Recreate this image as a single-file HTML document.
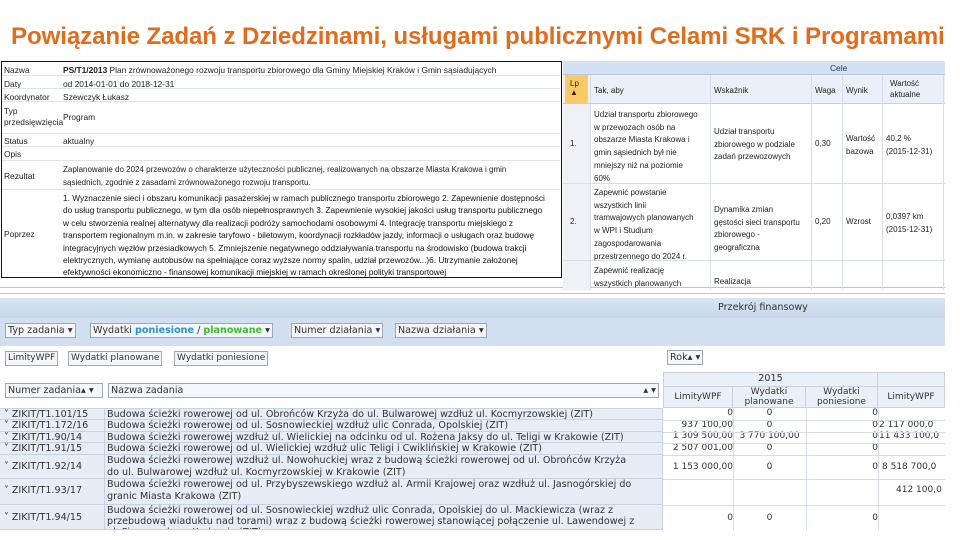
<!DOCTYPE html>
<html><head><meta charset="utf-8"><style>
*{margin:0;padding:0;box-sizing:border-box}
body{width:960px;height:540px;background:#fff;position:relative;overflow:hidden;font-family:"Liberation Sans","DejaVu Sans",sans-serif;color:#222}
.a{position:absolute;white-space:nowrap}
.t{font-size:8.4px}
.r{font-size:8px}
.v{font-family:"DejaVu Sans","Liberation Sans",sans-serif;font-size:9.6px;color:#333}
.btn{position:absolute;border:1px solid #9aa8ba;background:#f3f6fa;font-family:"DejaVu Sans",sans-serif;font-size:9.6px;color:#333;padding:1px 2px;white-space:nowrap;line-height:11px}
.cell{position:absolute;border-right:1px solid #c9d3df;border-bottom:1px solid #c9d3df;font-family:"DejaVu Sans",sans-serif;font-size:9.6px;color:#333;white-space:nowrap;overflow:hidden;line-height:11.5px}
</style></head><body>
<div class="a" style="left:11px;top:23px;font-size:24.1px;color:#e26b1c;font-weight:bold;letter-spacing:-0.1px">Powiązanie Zadań z Dziedzinami, usługami publicznymi Celami SRK i Programami</div>

<div class="a" style="left:1px;top:61px;width:561px;height:217px;border:1.5px solid #111"></div>
<div class="a t" style="left:4px;top:65px">Nazwa</div>
<div class="a t" style="left:4px;top:79px">Daty</div>
<div class="a t" style="left:4px;top:92px">Koordynator</div>
<div class="a t" style="left:4px;top:106px;line-height:11px">Typ<br>przedsięwzięcia</div>
<div class="a t" style="left:4px;top:136px">Status</div>
<div class="a t" style="left:4px;top:149px">Opis</div>
<div class="a t" style="left:4px;top:171px">Rezultat</div>
<div class="a t" style="left:4px;top:229px">Poprzez</div>
<div class="a" style="left:2px;top:75px;width:558px;border-top:1px solid #dde3ea"></div>
<div class="a" style="left:2px;top:88px;width:558px;border-top:1px solid #dde3ea"></div>
<div class="a" style="left:2px;top:101px;width:558px;border-top:1px solid #dde3ea"></div>
<div class="a" style="left:2px;top:133px;width:558px;border-top:1px solid #dde3ea"></div>
<div class="a" style="left:2px;top:146px;width:558px;border-top:1px solid #dde3ea"></div>
<div class="a" style="left:2px;top:160px;width:558px;border-top:1px solid #dde3ea"></div>
<div class="a" style="left:2px;top:189px;width:558px;border-top:1px solid #dde3ea"></div>
<div class="a t" style="left:63px;top:65px"><b>PS/T1/2013</b> Plan zrównoważonego rozwoju transportu zbiorowego dla Gminy Miejskiej Kraków i Gmin sąsiadujących</div>
<div class="a t" style="left:63px;top:79px">od 2014-01-01 do 2018-12-31</div>
<div class="a t" style="left:63px;top:92px">Szewczyk Łukasz</div>
<div class="a t" style="left:63px;top:112px">Program</div>
<div class="a t" style="left:63px;top:136px">aktualny</div>
<div class="a t" style="left:63px;top:164px;line-height:12.5px;font-size:8px">Zaplanowanie do 2024 przewozów o charakterze użyteczności publicznej, realizowanych na obszarze Miasta Krakowa i gmin<br>sąsiednich, zgodnie z zasadami zrównoważonego rozwoju transportu.</div>
<div class="a" style="left:63px;top:192px;line-height:12.4px;color:#111;font-size:8.3px">1. Wyznaczenie sieci i obszaru komunikacji pasażerskiej w ramach publicznego transportu zbiorowego 2. Zapewnienie dostępności<br>do usług transportu publicznego, w tym dla osób niepełnosprawnych 3. Zapewnienie wysokiej jakości usług transportu publicznego<br>w celu stworzenia realnej alternatywy dla realizacji podróży samochodami osobowymi 4. Integrację transportu miejskiego z<br>transportem regionalnym m.in. w zakresie taryfowo - biletowym, koordynacji rozkładów jazdy, informacji o usługach oraz budowę<br>integracyjnych węzłów przesiadkowych 5. Zmniejszenie negatywnego oddziaływania transportu na środowisko (budowa trakcji<br>elektrycznych, wymianę autobusów na spełniające coraz wyższe normy spalin, udział przewozów...)6. Utrzymanie założonej<br>efektywności ekonomiczno - finansowej komunikacji miejskiej w ramach określonej polityki transportowej</div>
<div class="a" style="left:0;top:287px;width:945px;border-top:1px solid #b9c6d6"></div>
<div class="a" style="left:0;top:293px;width:945px;border-top:1px solid #b9c6d6"></div>

<div class="a" style="left:563px;top:61px;width:382px;height:14px;background:#d3e1f2;border-bottom:1px solid #b8c8dc"></div>
<div class="a t" style="left:830px;top:63px;color:#335">Cele</div>
<div class="a" style="left:563px;top:75px;width:382px;height:29px;background:#eaf0f8;border-bottom:1px solid #c4d0de"></div>
<div class="a" style="left:565px;top:75px;width:23px;height:29px;background:#fbc966"></div>
<div class="a r" style="left:570px;top:79px">Lp<br>▲</div>
<div class="a r" style="left:594px;top:86px">Tak, aby</div>
<div class="a r" style="left:714px;top:86px">Wskaźnik</div>
<div class="a r" style="left:815px;top:86px">Waga</div>
<div class="a r" style="left:846px;top:86px">Wynik</div>
<div class="a r" style="left:890px;top:78px;line-height:11px">Wartość<br>aktualne</div>
<div class="a" style="left:563px;top:104px;width:27px;height:186px;background:#eef1f5"></div>
<div class="a" style="left:590px;top:75px;height:215px;border-left:1px solid #d8dee6"></div>
<div class="a" style="left:710px;top:75px;height:215px;border-left:1px solid #d8dee6"></div>
<div class="a" style="left:811px;top:75px;height:215px;border-left:1px solid #d8dee6"></div>
<div class="a" style="left:842px;top:75px;height:215px;border-left:1px solid #d8dee6"></div>
<div class="a" style="left:882px;top:75px;height:215px;border-left:1px solid #d8dee6"></div>
<div class="a" style="left:943px;top:75px;height:215px;border-left:1px solid #d8dee6"></div>
<div class="a" style="left:563px;top:183px;width:382px;border-top:1px solid #d8dee6"></div>
<div class="a" style="left:563px;top:260px;width:382px;border-top:1px solid #d8dee6"></div>
<div class="a r" style="left:570px;top:139px">1.</div>
<div class="a r" style="left:594px;top:109px;line-height:12.7px">Udział transportu zbiorowego<br>w przewozach osób na<br>obszarze Miasta Krakowa i<br>gmin sąsiednich był nie<br>mniejszy niż na poziomie<br>60%</div>
<div class="a r" style="left:714px;top:126px;line-height:12.7px">Udział transportu<br>zbiorowego w podziale<br>zadań przewozowych</div>
<div class="a r" style="left:815px;top:139px">0,30</div>
<div class="a r" style="left:846px;top:133px;line-height:12.7px">Wartość<br>bazowa</div>
<div class="a r" style="left:886px;top:133px;line-height:12.7px">40,2 %<br>(2015-12-31)</div>
<div class="a r" style="left:570px;top:217px">2.</div>
<div class="a r" style="left:594px;top:187px;line-height:12.7px">Zapewnić powstanie<br>wszystkich linii<br>tramwajowych planowanych<br>w WPI i Studium<br>zagospodarowania<br>przestrzennego do 2024 r.</div>
<div class="a r" style="left:714px;top:204px;line-height:12.7px">Dynamika zmian<br>gęstości sieci transportu<br>zbiorowego -<br>geograficzna</div>
<div class="a r" style="left:815px;top:217px">0,20</div>
<div class="a r" style="left:846px;top:217px">Wzrost</div>
<div class="a r" style="left:886px;top:211px;line-height:12.7px">0,0397 km<br>(2015-12-31)</div>
<div class="a r" style="left:594px;top:265px;line-height:12.7px">Zapewnić realizację<br>wszystkich planowanych</div>
<div class="a r" style="left:714px;top:277px">Realizacja</div>

<div class="a" style="left:0;top:298px;width:945px;height:20px;background:linear-gradient(#d8e4f2,#c6d6ea)"></div>
<div class="a v" style="left:718px;top:302px">Przekrój finansowy</div>
<div class="a" style="left:0;top:318px;width:945px;height:28px;background:#d2dff0"></div>
<div class="btn" style="left:5px;top:323px">Typ zadania ▾</div>
<div class="btn" style="left:90px;top:323px">Wydatki <b style="color:#2a8fd0">poniesione</b> / <b style="color:#3cbf2a">planowane</b> ▾</div>
<div class="btn" style="left:291px;top:323px">Numer działania ▾</div>
<div class="btn" style="left:395px;top:323px">Nazwa działania ▾</div>
<div class="btn" style="left:5px;top:351px;font-size:9px">LimityWPF</div>
<div class="btn" style="left:68px;top:351px;font-size:9px">Wydatki planowane</div>
<div class="btn" style="left:174px;top:351px;font-size:9px">Wydatki poniesione</div>
<div class="btn" style="left:667px;top:350px">Rok▴ ▾</div>
<div class="btn" style="left:5px;top:383px;width:98px">Numer zadania▴ ▾</div>
<div class="btn" style="left:108px;top:383px;width:551px">Nazwa zadania<span style="float:right">▴ ▾</span></div>

<div class="cell" style="left:663px;top:372px;width:215px;height:15px;background:#eaf0f8;text-align:center;border-left:1px solid #c9d3df;border-top:1px solid #c9d3df">2015</div>
<div class="cell" style="left:878px;top:372px;width:67px;height:15px;background:#eaf0f8;border-top:1px solid #c9d3df"></div>
<div class="cell" style="left:663px;top:387px;width:70px;height:21px;background:#eaf0f8;border-left:1px solid #c9d3df;text-align:center;line-height:20px;font-size:9px">LimityWPF</div>
<div class="cell" style="left:733px;top:387px;width:73px;height:21px;background:#eaf0f8;text-align:center;line-height:10px;font-size:9px">Wydatki<br>planowane</div>
<div class="cell" style="left:806px;top:387px;width:72px;height:21px;background:#eaf0f8;text-align:center;line-height:10px;font-size:9px">Wydatki<br>poniesione</div>
<div class="cell" style="left:878px;top:387px;width:67px;height:21px;background:#eaf0f8;text-align:center;line-height:20px;font-size:9px">LimityWPF</div>

<div class="cell" style="left:0;top:408px;width:105px;height:12px;background:#e6edf7;border-top:1px solid #c9d3df;padding-left:4px">˅ ZIKIT/T1.101/15</div>
<div class="cell" style="left:105px;top:408px;width:558px;height:12px;background:#e6edf7;border-top:1px solid #c9d3df;padding-left:2px">Budowa ścieżki rowerowej od ul. Obrońców Krzyża do ul. Bulwarowej wzdłuż ul. Kocmyrzowskiej (ZIT)</div>
<div class="cell" style="left:0;top:420px;width:105px;height:12px;background:#e6edf7;padding-left:4px">˅ ZIKIT/T1.172/16</div>
<div class="cell" style="left:105px;top:420px;width:558px;height:12px;background:#e6edf7;padding-left:2px">Budowa ścieżki rowerowej od ul. Sosnowieckiej wzdłuż ulic Conrada, Opolskiej (ZIT)</div>
<div class="cell" style="left:0;top:432px;width:105px;height:11px;background:#e6edf7;padding-left:4px">˅ ZIKIT/T1.90/14</div>
<div class="cell" style="left:105px;top:432px;width:558px;height:11px;background:#e6edf7;padding-left:2px">Budowa ścieżki rowerowej wzdłuż ul. Wielickiej na odcinku od ul. Rożena Jaksy do ul. Teligi w Krakowie (ZIT)</div>
<div class="cell" style="left:0;top:443px;width:105px;height:12px;background:#e6edf7;padding-left:4px">˅ ZIKIT/T1.91/15</div>
<div class="cell" style="left:105px;top:443px;width:558px;height:12px;background:#e6edf7;padding-left:2px">Budowa ścieżki rowerowej od ul. Wielickiej wzdłuż ulic Teligi i Ćwiklińskiej w Krakowie (ZIT)</div>
<div class="cell" style="left:0;top:455px;width:105px;height:24px;background:#e6edf7;padding-left:4px;line-height:24px">˅ ZIKIT/T1.92/14</div>
<div class="cell" style="left:105px;top:455px;width:558px;height:24px;background:#e6edf7;padding-left:2px">Budowa ścieżki rowerowej wzdłuż ul. Nowohuckiej wraz z budową ścieżki rowerowej od ul. Obrońców Krzyża<br>do ul. Bulwarowej wzdłuż ul. Kocmyrzowskiej w Krakowie (ZIT)</div>
<div class="cell" style="left:0;top:479px;width:105px;height:26px;background:#e6edf7;padding-left:4px;line-height:24px">˅ ZIKIT/T1.93/17</div>
<div class="cell" style="left:105px;top:479px;width:558px;height:26px;background:#e6edf7;padding-left:2px">Budowa ścieżki rowerowej od ul. Przybyszewskiego wzdłuż al. Armii Krajowej oraz wzdłuż ul. Jasnogórskiej do<br>granic Miasta Krakowa (ZIT)</div>
<div class="cell" style="left:0;top:505px;width:105px;height:25px;background:#e6edf7;padding-left:4px;line-height:26px">˅ ZIKIT/T1.94/15</div>
<div class="cell" style="left:105px;top:505px;width:558px;height:25px;background:#e6edf7;padding-left:2px;line-height:11px">Budowa ścieżki rowerowej od ul. Sosnowieckiej wzdłuż ulic Conrada, Opolskiej do ul. Mackiewicza (wraz z<br>przebudową wiaduktu nad torami) wraz z budową ścieżki rowerowej stanowiącej połączenie ul. Lawendowej z<br>ul. Pieszczyska w Krakowie (ZIT)</div>

<div class="a v" style="left:663px;top:408px;width:70px;text-align:right;line-height:11.7px;font-size:9px">0<br>937 100,00<br>1 309 500,00<br>2 507 001,00</div>
<div class="a v" style="left:733px;top:408px;width:73px;text-align:center;line-height:11.7px;font-size:9px">0<br>0<br>3 770 100,00<br>0</div>
<div class="a v" style="left:806px;top:408px;width:72px;text-align:right;line-height:11.7px;font-size:9px">0<br>0<br>0<br>0</div>
<div class="a v" style="left:879px;top:408px;line-height:11.7px;font-size:9px"><br>2 117 000,0<br>11 433 100,0</div>
<div class="a v" style="left:663px;top:462px;width:70px;text-align:right;font-size:9px">1 153 000,00</div>
<div class="a v" style="left:733px;top:462px;width:73px;text-align:center;font-size:9px">0</div>
<div class="a v" style="left:806px;top:462px;width:72px;text-align:right;font-size:9px">0</div>
<div class="a v" style="left:882px;top:462px;font-size:9px">8 518 700,0</div>
<div class="a v" style="left:896px;top:485px;font-size:9px">412 100,0</div>
<div class="a v" style="left:663px;top:513px;width:70px;text-align:right;font-size:9px">0</div>
<div class="a v" style="left:733px;top:513px;width:73px;text-align:center;font-size:9px">0</div>
<div class="a v" style="left:806px;top:513px;width:72px;text-align:right;font-size:9px">0</div>
<div class="a" style="left:733px;top:408px;height:122px;border-left:1px solid #d4dce6"></div>
<div class="a" style="left:806px;top:408px;height:122px;border-left:1px solid #d4dce6"></div>
<div class="a" style="left:878px;top:408px;height:122px;border-left:1px solid #d4dce6"></div>
<div class="a" style="left:663px;top:420px;width:282px;border-top:1px solid #d4dce6"></div>
<div class="a" style="left:663px;top:432px;width:282px;border-top:1px solid #d4dce6"></div>
<div class="a" style="left:663px;top:443px;width:282px;border-top:1px solid #d4dce6"></div>
<div class="a" style="left:663px;top:455px;width:282px;border-top:1px solid #d4dce6"></div>
<div class="a" style="left:663px;top:479px;width:282px;border-top:1px solid #d4dce6"></div>
<div class="a" style="left:663px;top:505px;width:282px;border-top:1px solid #d4dce6"></div>
</body></html>
